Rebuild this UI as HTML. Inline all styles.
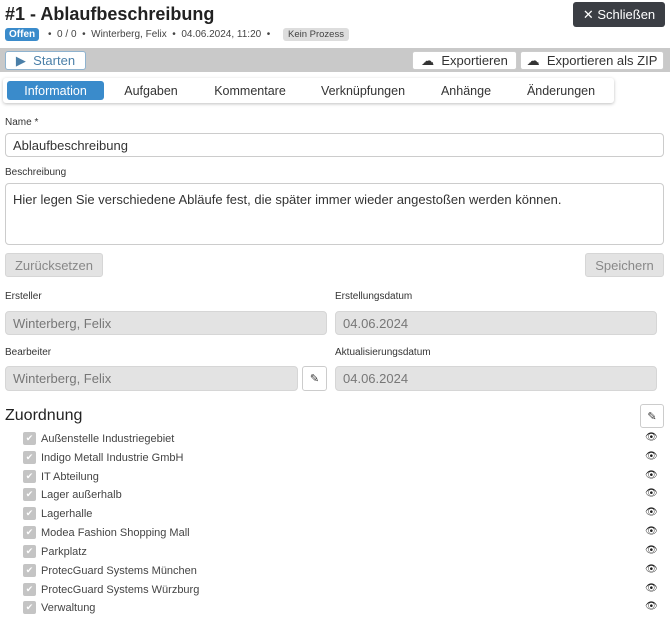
<!DOCTYPE html>
<html><head><meta charset="utf-8"><style>
*{box-sizing:border-box;margin:0;padding:0}
body{width:670px;height:623px;background:#fff;font-family:"Liberation Sans",sans-serif;color:#333;position:relative;overflow:hidden;font-size:12px}
.a{position:absolute}
.btn{position:absolute;border:1px solid #ccc;border-radius:3px;background:#fff;display:flex;align-items:center;justify-content:center;font-size:13px;color:#333}
.inp{position:absolute;border:1px solid #ccc;border-radius:4px;background:#fff;padding:0 7px;display:flex;align-items:center;font-size:13px}
.dis{background:#e3e3e3;border-color:#d6d6d6;color:#777}
.lbl{position:absolute;font-size:10px;color:#333}
.tab{position:absolute;top:81px;height:19px;display:flex;align-items:center;justify-content:center;font-size:12.5px;color:#333}
.item{position:absolute;left:23px;font-size:11px;color:#444;display:flex;align-items:center}
.cb{width:13px;height:13px;background:#c4c4c4;border-radius:2px;margin-right:5px;color:#fff;font-size:9px;display:flex;align-items:center;justify-content:center}
.eye{position:absolute;left:645px;font-size:10px;color:#222}
</style></head><body>
<div class="a" style="left:5px;top:4px;font-size:18px;font-weight:bold;color:#222">#1 - Ablaufbeschreibung</div>
<div class="a" style="left:5px;top:28px;background:#3a8bcb;color:#fff;font-size:10px;font-weight:bold;padding:1px 4px;border-radius:3px;height:13px;line-height:11px">Offen</div>
<div class="a" style="left:48px;top:29px;font-size:10px;color:#444">•&nbsp; 0 / 0 &nbsp;•&nbsp; Winterberg, Felix &nbsp;•&nbsp; 04.06.2024, 11:20 &nbsp;•</div>
<div class="a" style="left:283px;top:28px;background:#ddd;color:#444;font-size:9.5px;padding:1px 5px;border-radius:3px;height:13px;line-height:11px">Kein Prozess</div>
<div class="a" style="left:573px;top:2px;width:92px;height:25px;background:#3b3e44;color:#fff;border-radius:3px;font-size:13px;display:flex;align-items:center;justify-content:center">✕ Schließen</div>
<div class="a" style="left:0;top:48px;width:670px;height:24px;background:#c9c9c9"></div>
<div class="btn" style="left:5px;top:51px;width:81px;height:19px;color:#4a7fa8;border-color:#8fb3cf">▶&nbsp; Starten</div>
<div class="btn" style="left:412px;top:51px;width:105px;height:19px">☁&nbsp; Exportieren</div>
<div class="btn" style="left:520px;top:51px;width:144px;height:19px">☁&nbsp; Exportieren als ZIP</div>
<div class="a" style="left:3px;top:78px;width:611px;height:25px;background:#fff;box-shadow:0 1px 3px rgba(0,0,0,.25);border-radius:3px"></div>
<div class="tab" style="left:7px;width:97px;background:#3a8bcb;color:#fff;border-radius:3px">Information</div>
<div class="tab" style="left:115px;width:72px">Aufgaben</div>
<div class="tab" style="left:205px;width:90px">Kommentare</div>
<div class="tab" style="left:313px;width:100px">Verknüpfungen</div>
<div class="tab" style="left:430px;width:72px">Anhänge</div>
<div class="tab" style="left:520px;width:82px">Änderungen</div>
<div class="lbl" style="left:5px;top:117px">Name *</div>
<div class="inp" style="left:5px;top:133px;width:659px;height:24px">Ablaufbeschreibung</div>
<div class="lbl" style="left:5px;top:167px">Beschreibung</div>
<div class="inp" style="left:5px;top:183px;width:659px;height:62px;align-items:flex-start;padding-top:8px">Hier legen Sie verschiedene Abläufe fest, die später immer wieder angestoßen werden können.</div>
<div class="btn dis" style="left:5px;top:253px;width:98px;height:24px;color:#888">Zurücksetzen</div>
<div class="btn dis" style="left:585px;top:253px;width:79px;height:24px;color:#888">Speichern</div>
<div class="lbl" style="left:5px;top:291px">Ersteller</div>
<div class="lbl" style="left:335px;top:291px">Erstellungsdatum</div>
<div class="inp dis" style="left:5px;top:311px;width:322px;height:24px">Winterberg, Felix</div>
<div class="inp dis" style="left:335px;top:311px;width:322px;height:24px">04.06.2024</div>
<div class="lbl" style="left:5px;top:347px">Bearbeiter</div>
<div class="lbl" style="left:335px;top:347px">Aktualisierungsdatum</div>
<div class="inp dis" style="left:5px;top:366px;width:293px;height:25px">Winterberg, Felix</div>
<div class="btn" style="left:302px;top:366px;width:25px;height:25px;font-size:11px">✎</div>
<div class="inp dis" style="left:335px;top:366px;width:322px;height:25px">04.06.2024</div>
<div class="a" style="left:5px;top:407px;font-size:16px;color:#222">Zuordnung</div>
<div class="btn" style="left:640px;top:404px;width:24px;height:24px;font-size:11px">✎</div>
<div class="item" style="top:432px"><span class="cb">✔</span>Außenstelle Industriegebiet</div>
<div class="item" style="top:451px"><span class="cb">✔</span>Indigo Metall Industrie GmbH</div>
<div class="item" style="top:470px"><span class="cb">✔</span>IT Abteilung</div>
<div class="item" style="top:488px"><span class="cb">✔</span>Lager außerhalb</div>
<div class="item" style="top:507px"><span class="cb">✔</span>Lagerhalle</div>
<div class="item" style="top:526px"><span class="cb">✔</span>Modea Fashion Shopping Mall</div>
<div class="item" style="top:545px"><span class="cb">✔</span>Parkplatz</div>
<div class="item" style="top:564px"><span class="cb">✔</span>ProtecGuard Systems München</div>
<div class="item" style="top:583px"><span class="cb">✔</span>ProtecGuard Systems Würzburg</div>
<div class="item" style="top:601px"><span class="cb">✔</span>Verwaltung</div>
<div class="eye" style="top:432px">👁</div><div class="eye" style="top:451px">👁</div><div class="eye" style="top:470px">👁</div><div class="eye" style="top:488px">👁</div><div class="eye" style="top:507px">👁</div><div class="eye" style="top:526px">👁</div><div class="eye" style="top:545px">👁</div><div class="eye" style="top:564px">👁</div><div class="eye" style="top:583px">👁</div><div class="eye" style="top:601px">👁</div>
</body></html>
